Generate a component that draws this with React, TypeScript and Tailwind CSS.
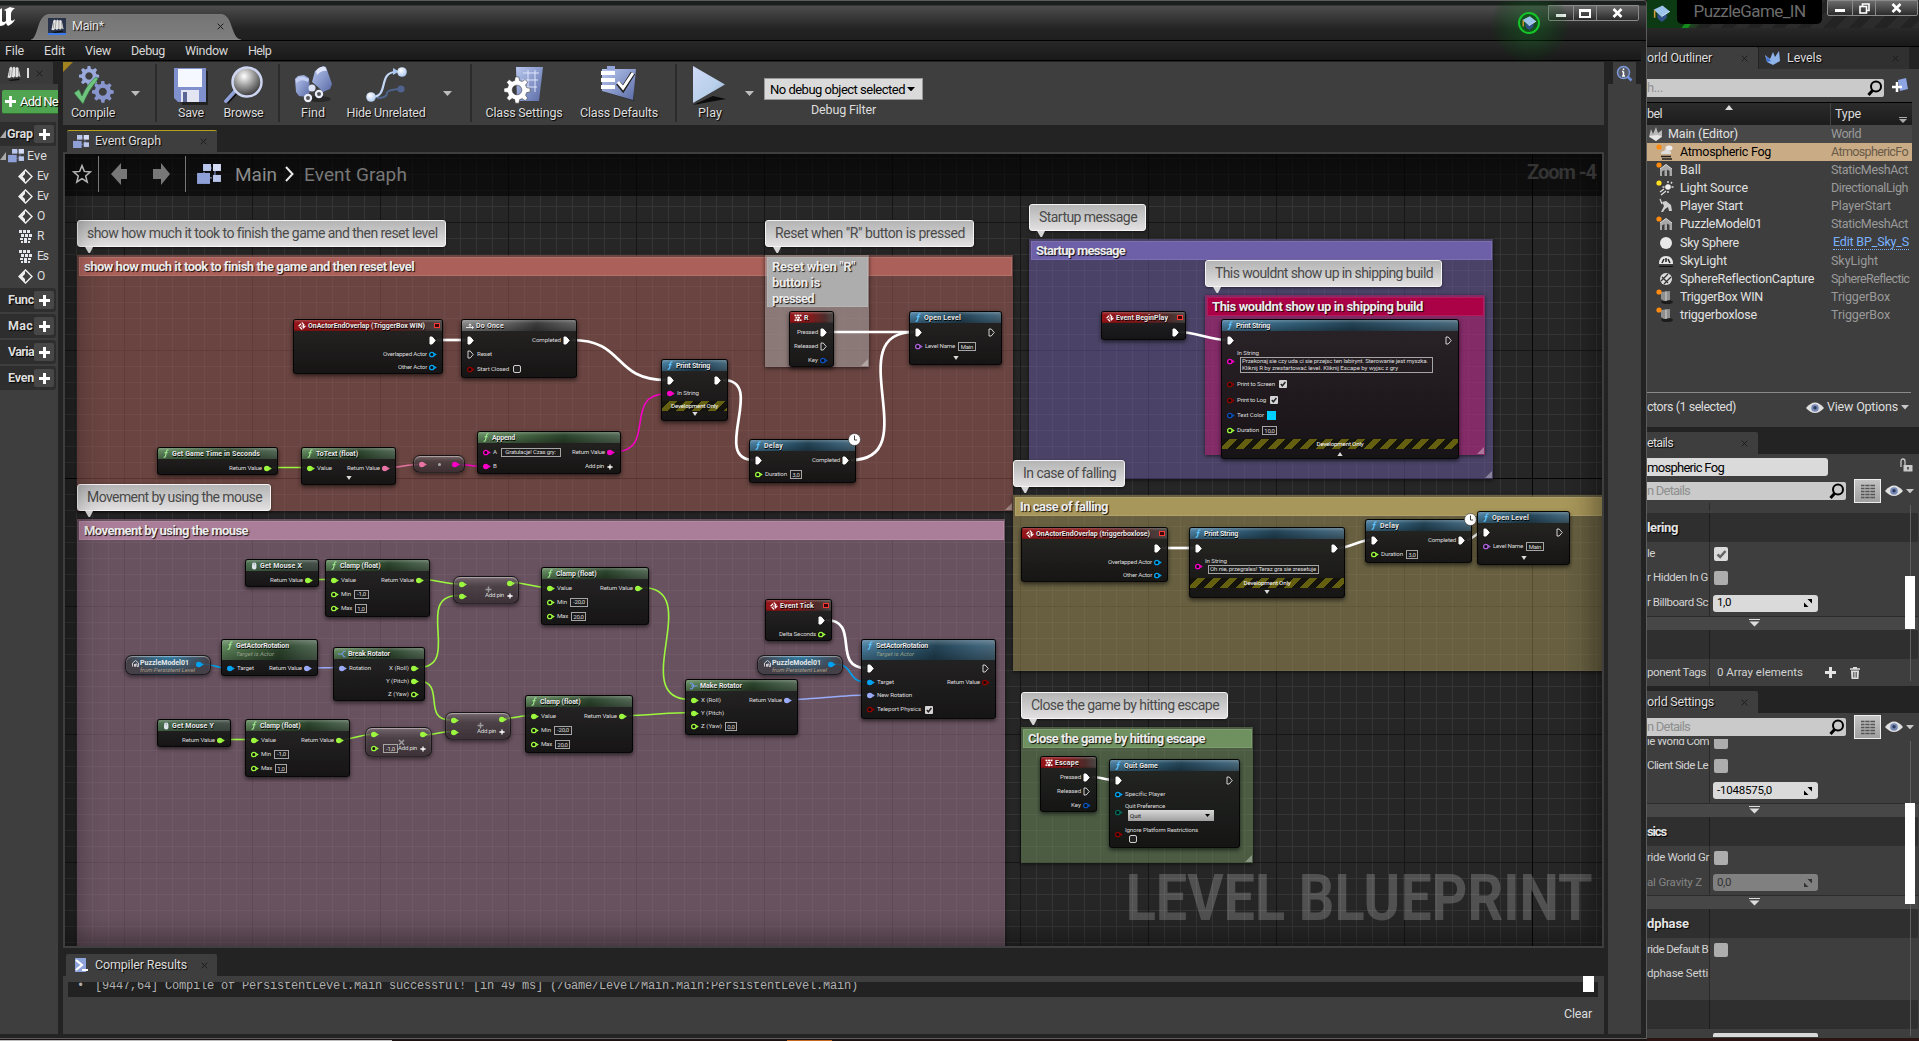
import React, { useLayoutEffect, useRef } from "react";
import type { ReactNode } from "react";

/* Text spread to a given width by letter spacing measured at run time. */
function Fit({ w, className = "", children }: { w: number; className?: string; children: string }) {
  const ref = useRef<HTMLSpanElement>(null);
  useLayoutEffect(() => {
    const el = ref.current;
    if (!el) return;
    el.style.letterSpacing = "0px";
    const natural = el.getBoundingClientRect().width;
    el.style.letterSpacing = `${(w - natural) / children.length}px`;
  }, [w, children]);
  return (
    <span ref={ref} className={`block w-max shrink-0 whitespace-pre ${className}`}>
      {children}
    </span>
  );
}

/* ---------- graph primitives ---------- */

const GREEN = "#9cf83e";
const WHITE = "#ffffff";
const BLUE = "#00a2f2";
const MAG = "#f800c8";
const LAV = "#9aabfa";
const RED = "#8c0000";
const ROSE = "#e874a4";
const NAVY = "#0a50b8";
const TEAL = "#04685a";
const PURPLE = "#a860d8";
const EXEC = "exec";

function Pin({ c, o }: { c: string; o?: boolean }) {
  if (c === EXEC)
    return (
      <svg className="shrink-0" width="9" height="9" viewBox="-0.5 0 9 9">
        <path d="M1.5 1 H3.7 L6.7 4.5 L3.7 8 H1.5Z" fill={o ? "none" : "#fff"} stroke="#fff" strokeWidth={o ? 0.8 : 1} strokeLinejoin="round" />
      </svg>
    );
  return (
    <svg className="shrink-0" width="9" height="7" viewBox="0 0 9 7">
      <circle cx="3.8" cy="3.5" r={o ? 2.2 : 2.8} fill={o ? "#0b0b0b" : c} stroke={c} strokeWidth={o ? 1.3 : 0} />
      <path d="M6.2 1.8 L8.8 3.5 L6.2 5.2Z" fill={c} />
    </svg>
  );
}

function Label({ w, children, className = "text-[#dcdcdc]" }: { w: number; children: string; className?: string }) {
  return <Fit w={w} className={`text-[6.2px] leading-[7px] ${className}`}>{children}</Fit>;
}

/* A line of pins: inputs on the left, outputs on the right. */
function Row({ h = 14, left, right }: { h?: number; left?: ReactNode; right?: ReactNode }) {
  return (
    <div className="flex shrink-0 items-center justify-between pl-[4px] pr-[5px]" style={{ height: h }}>
      <div className="flex items-center">{left}</div>
      <div className="flex items-center">{right}</div>
    </div>
  );
}

function In({ c, o, t, w = 0, children }: { c: string; o?: boolean; t?: string; w?: number; children?: ReactNode }) {
  return (
    <div className="flex items-center gap-[2px]">
      <Pin c={c} o={o} />
      {t && <Label w={w}>{t}</Label>}
      {children}
    </div>
  );
}

function Out({ c, o, t, w = 0 }: { c: string; o?: boolean; t?: string; w?: number }) {
  return (
    <div className="flex items-center gap-[1px]">
      {t && <Label w={w}>{t}</Label>}
      <Pin c={c} o={o} />
    </div>
  );
}

function Box({ w, children }: { w: number; children: ReactNode }) {
  return (
    <div className="ml-[1px] flex h-[9px] shrink-0 items-center justify-center whitespace-nowrap border border-[#a5a5a5] text-[6px] leading-none tracking-[-0.2px] text-[#ddd]" style={{ width: w }}>
      {children}
    </div>
  );
}

function Check({ on }: { on?: boolean }) {
  return on ? (
    <svg className="ml-[2px] shrink-0" width="8" height="8" viewBox="0 0 8 8">
      <rect width="8" height="8" rx="1" fill="#d4d4d4" />
      <path d="M1.8 4 L3.4 5.8 L6.4 2" stroke="#222" strokeWidth="1.4" fill="none" />
    </svg>
  ) : (
    <div className="ml-[2px] h-2 w-2 shrink-0 rounded-[2px] border-[1.5px] border-[#d0d0d0] bg-[#222]" />
  );
}

function Tri({ h, up }: { h: number; up?: boolean }) {
  return (
    <div className="flex shrink-0 items-center justify-center" style={{ height: h }}>
      <svg width="6" height="4" viewBox="0 0 6 4">
        <path d={up ? "M0.4 4 L3 0 L5.6 4Z" : "M0.4 0 L3 4 L5.6 0Z"} fill="#ddd" />
      </svg>
    </div>
  );
}

function DevOnly() {
  return (
    <div className="mt-px flex h-[10px] shrink-0 items-center justify-center bg-[repeating-linear-gradient(135deg,#15140c_0px,#15140c_5.6px,#655f10_5.6px,#655f10_11.3px)]">
      <Label w={47} className="text-white">Development Only</Label>
    </div>
  );
}

const HEADS: Record<string, string> = {
  red: "bg-[linear-gradient(180deg,rgba(255,255,255,.22),transparent_25%,transparent_80%,rgba(0,0,0,.25)),linear-gradient(90deg,#941418,#861a1c_45%,#4d2b2a_80%,#4a4644)]",
  blue: "bg-[linear-gradient(180deg,rgba(255,255,255,.22),transparent_30%,rgba(0,0,0,.3)),linear-gradient(100deg,#4b7f9f,#366580_25%,#234355_55%,#3d6279_85%,#4c6b7c)]",
  green: "bg-[linear-gradient(180deg,rgba(255,255,255,.22),transparent_30%,rgba(0,0,0,.3)),linear-gradient(100deg,#62895f,#4d704a_25%,#2c442b_60%,#47604a_85%,#566a57)]",
  mouse: "bg-[linear-gradient(180deg,rgba(255,255,255,.25),transparent_30%,rgba(0,0,0,.2)),linear-gradient(90deg,#4d7050,#3c5540_50%,#46504a)]",
  gray: "bg-[linear-gradient(180deg,rgba(255,255,255,.22),transparent_30%,rgba(0,0,0,.3)),linear-gradient(100deg,#8a8a8a,#6f6f6f_30%,#3c3c3c_65%,#666)]",
};

function HeadIcon({ kind }: { kind: string }) {
  if (kind === "event")
    return (
      <svg className="shrink-0" width="8" height="8" viewBox="0 0 8 8"><path d="M4 .8 L7.2 4 L4 7.2 L.8 4Z" fill="none" stroke="#fff" strokeWidth="1.2" strokeDasharray="3.2 1.3" /><path d="M3 4h3M4.8 2.8 6 4 4.8 5.2" stroke="#fff" strokeWidth=".9" fill="none" /></svg>
    );
  if (kind === "key")
    return (
      <svg className="shrink-0" width="8" height="8" viewBox="0 0 8 8" fill="#fff"><rect x=".5" y=".6" width="2" height="1.7" /><rect x="3" y=".6" width="2" height="1.7" /><rect x="5.5" y=".6" width="2" height="1.7" /><rect x="1.5" y="2.9" width="2" height="1.7" /><rect x="4" y="2.9" width="2" height="1.7" /><rect x="3" y="5" width="2" height="2.2" /><rect x=".5" y="5.4" width="2" height="1.5" /><rect x="5.5" y="5.4" width="2" height="1.5" /></svg>
    );
  if (kind === "mouse")
    return (
      <svg className="shrink-0" width="8" height="8" viewBox="0 0 8 8"><rect x="2" y=".6" width="4.4" height="7" rx="2.1" fill="#dfe3ea" /><path d="M4.2 1v2.6" stroke="#8790a0" strokeWidth=".6" /></svg>
    );
  if (kind === "break" || kind === "make")
    return (
      <svg className="shrink-0" width="8" height="8" viewBox="0 0 8 8" fill="none" stroke="#6f9cf0" strokeWidth="1.1">{kind === "break" ? <path d="M0 4h4M7.5 1.2H6L4 4l2 2.8h1.5" /> : <path d="M0 1.2h2L4 4 2 6.8H0M1 4h6.5" />}</svg>
    );
  if (kind === "once")
    return (
      <svg className="shrink-0" width="8" height="8" viewBox="0 0 8 8" fill="none" stroke="#e4e4e4" strokeWidth="1"><path d="M0 5.5h7.5M4 5.5V2.2M2.8 3.4 4 1.8l1.2 1.6M6 4.2 7.5 5.5 6 6.8" /></svg>
    );
  return (
    <svg className="shrink-0" width="8" height="9" viewBox="0 0 8 9" fill="none" stroke={kind === "fg" ? "#9be08e" : "#5fc4ff"} strokeWidth="1.2"><path d="M6.4 1.1C5.2.5 4.7 1.2 4.4 2.6L3.6 6.6C3.3 8 2.7 8.5 1.6 8M2.6 3.6h3" /></svg>
  );
}

type NodeProps = { x: number; y: number; w: number; h: number; head: string; icon: string; title: string; tw: number; sub?: boolean; stop?: boolean; badge?: ReactNode; children?: ReactNode };

function Node({ x, y, w, h, head, icon, title, tw, sub, stop, badge, children }: NodeProps) {
  return (
    <div className="absolute rounded-[3px] shadow-[0_2px_4px_rgba(0,0,0,.6)]" style={{ left: x, top: y, width: w, height: h }}>
      <div className="flex h-full flex-col overflow-hidden rounded-[3px] border border-black/80 bg-[linear-gradient(180deg,rgba(34,34,34,.92),rgba(18,18,18,.95))]">
        <div className={`shrink-0 pl-[4px] ${sub ? "mb-px h-[20px]" : "mb-[2px] h-[11px]"} ${HEADS[head]}`}>
          <div className="flex h-[11px] items-center gap-[2px]">
            <HeadIcon kind={icon} />
            <Fit w={tw} className="text-[7px] font-bold leading-[8px] text-[#e8e8e8] [text-shadow:0.5px_0.5px_0.5px_#000]">{title}</Fit>
            {stop && <div className="ml-auto mr-[2px] h-[5px] w-[6px] border border-[#ff3a36] bg-[#3c0505]" />}
          </div>
          {sub && <Label w={38} className="ml-[10px] italic text-[#93a088]">Target is Actor</Label>}
        </div>
        {children}
      </div>
      {badge}
    </div>
  );
}

function Pill({ x, y, w, h, blue, children }: { x: number; y: number; w: number; h: number; blue?: boolean; children?: ReactNode }) {
  return (
    <div
      className={`absolute flex rounded-[7px] border border-black/60 shadow-[0_2px_4px_rgba(0,0,0,.5),inset_0_1px_1px_rgba(255,255,255,.45)] ${blue ? "bg-[radial-gradient(ellipse_at_50%_0%,rgba(40,130,175,.9),rgba(60,60,66,.8)_70%)]" : "bg-[linear-gradient(180deg,rgba(120,110,115,.7),rgba(68,60,64,.75)_35%,rgba(50,42,46,.8))]"}`}
      style={{ left: x, top: y, width: w, height: h }}
    >
      {children}
    </div>
  );
}

function Plus({ c = "#fff", s = 7 }: { c?: string; s?: number }) {
  return <svg className="shrink-0" width={s} height={s} viewBox="0 0 7 7"><path d="M3.5 .5v6M.5 3.5h6" stroke={c} strokeWidth="1.5" /></svg>;
}

function AddPin() {
  return <div className="flex items-center gap-[3px] pr-[2px]"><Label w={19}>Add pin</Label><Plus s={6} /></div>;
}

function Clamp({ x, y, wide }: { x: number; y: number; wide?: boolean }) {
  return (
    <Node x={x} y={y} w={wide ? 108 : 105} h={58} head="green" icon="fg" title="Clamp (float)" tw={40.5}>
      <Row left={<In c={GREEN} t="Value" w={15} />} right={<Out c={GREEN} t="Return Value" w={33} />} />
      <Row left={<In c={GREEN} o t="Min" w={10}><Box w={wide ? 18 : 15}>{wide ? "-20,0" : "-1,0"}</Box></In>} />
      <Row h={15} left={<In c={GREEN} o t="Max" w={11}><Box w={wide ? 15 : 12}>{wide ? "20,0" : "1,0"}</Box></In>} />
    </Node>
  );
}

function Mouse({ x, y, axis }: { x: number; y: number; axis: string }) {
  return (
    <Node x={x} y={y} w={74} h={28} head="mouse" icon="mouse" title={"Get Mouse " + axis} tw={42}>
      <Row right={<Out c={GREEN} t="Return Value" w={33} />} />
    </Node>
  );
}

function Add({ x, y }: { x: number; y: number }) {
  return (
    <Pill x={x} y={y} w={66} h={28}>
      <div className="flex flex-col gap-[5px] pl-[4px] pt-[4px]"><Pin c={GREEN} /><Pin c={GREEN} /></div>
      <div className="ml-auto flex w-[33px] flex-col pr-[3px] pt-[3px]">
        <div className="flex justify-between"><span className="pt-[6px]"><Plus c="#9a9a9a" /></span><Pin c={GREEN} /></div>
        <div className="-mt-[1px] flex justify-end"><AddPin /></div>
      </div>
    </Pill>
  );
}

function Puzzle({ x, y }: { x: number; y: number }) {
  return (
    <Pill x={x} y={y} w={86} h={20} blue>
      <svg className="ml-[6px] mt-[4px] shrink-0" width="7" height="7" viewBox="0 0 7 7"><path d="M.5 6.5V3L3.5.5 6.5 3V6.5H5V4H3.5V6.5H2.5V4" fill="none" stroke="#ccc" strokeWidth="1" /></svg>
      <div className="ml-[1px] flex w-[55px] flex-col pt-[3px]">
        <Fit w={49} className="text-[7px] font-bold leading-[8px] text-[#e8e8e8]">PuzzleModel01</Fit>
        <Label w={55} className="italic text-[#a79c86]">from Persistent Level</Label>
      </div>
      <span className="pt-[5px]"><Pin c={BLUE} /></span>
    </Pill>
  );
}

function Delay({ x, y }: { x: number; y: number }) {
  const clock = <svg className="absolute -right-[5px] -top-[6px]" width="13" height="13" viewBox="0 0 13 13"><circle cx="6.5" cy="6.5" r="6" fill="#fff" stroke="#222" strokeWidth=".5" /><path d="M6.5 2.5V7H9" stroke="#444" fill="none" strokeWidth="1" /></svg>;
  return (
    <Node x={x} y={y} w={107} h={44} head="blue" icon="f" title="Delay" tw={19} badge={clock}>
      <Row left={<In c={EXEC} />} right={<Out c={EXEC} t="Completed" w={28} />} />
      <Row h={15} left={<In c={GREEN} o t="Duration" w={22}><Box w={12}>3,0</Box></In>} />
    </Node>
  );
}

function OpenLevel({ x, y }: { x: number; y: number }) {
  return (
    <Node x={x} y={y} w={93} h={54} head="blue" icon="f" title="Open Level" tw={37}>
      <Row left={<In c={EXEC} />} right={<Out c={EXEC} o />} />
      <Row h={15} left={<In c={PURPLE} o t="Level Name" w={30}><Box w={18}>Main</Box></In>} />
      <Tri h={8} />
    </Node>
  );
}

function Overlap({ x, y, w, title, tw }: { x: number; y: number; w: number; title: string; tw: number }) {
  return (
    <Node x={x} y={y} w={w} h={55} head="red" icon="event" title={title} tw={tw} stop>
      <Row right={<Out c={EXEC} />} />
      <Row right={<Out c={BLUE} o t="Overlapped Actor" w={44} />} />
      <Row h={12} right={<Out c={BLUE} o t="Other Actor" w={29} />} />
    </Node>
  );
}

function KeyNode({ x, y, w, title, tw }: { x: number; y: number; w: number; title: string; tw: number }) {
  return (
    <Node x={x} y={y} w={w} h={56} head="red" icon="key" title={title} tw={tw}>
      <Row right={<Out c={EXEC} t="Pressed" w={21} />} />
      <Row right={<Out c={EXEC} o t="Released" w={24} />} />
      <Row right={<Out c={NAVY} o t="Key" w={10} />} />
    </Node>
  );
}

function Comment({ x, y, w, h, c, hh = 19, grip = true, tint, lines }: { x: number; y: number; w: number; h: number; c: string; hh?: number; grip?: boolean; tint?: string; lines: [string, number][] }) {
  return (
    <div className="absolute shadow-[0_1px_4px_rgba(0,0,0,.6)]" style={{ left: x, top: y, width: w, height: h }}>
      <div className="absolute inset-0 opacity-50" style={{ backgroundColor: tint ?? c }} />
      <div className="relative ml-[2px] mr-px flex flex-col border border-white/10 pl-[4px] text-[13px] font-bold leading-[15px] text-[#ececec] [text-shadow:1px_1px_1px_rgba(0,0,0,.9)]" style={{ height: hh, top: 2, backgroundColor: c }}>
        {lines.map(([t, w]) => <Fit key={t} w={w} className="pt-px last:pb-0">{t}</Fit>)}
      </div>
      {grip && <svg className="absolute bottom-[1px] right-[1px]" width="7" height="7" viewBox="0 0 7 7"><path d="M0 7L7 0V7Z" fill="#fff" opacity=".35" /></svg>}
    </div>
  );
}

function Bubble({ x, y, w, tw, children }: { x: number; y: number; w: number; tw: number; children: string }) {
  return (
    <div className="absolute flex h-[27px] items-center rounded-[3px] border border-[#f4f4f4] bg-[linear-gradient(180deg,#b4b4b4,#e2e0e0)] pb-px pl-[9px] text-[14px] leading-none text-[#4a4a4a] shadow-[0_1px_3px_rgba(0,0,0,.5)]" style={{ left: x, top: y, width: w }}>
      <Fit w={tw}>{children}</Fit>
      <svg className="absolute left-[7px] top-[26px]" width="8" height="6" viewBox="0 0 8 6"><path d="M0 0H8L5 6H3.6Z" fill="#d6d6d6" /></svg>
    </div>
  );
}

type Wire = [number, number, number, number, string];
const WIRES: Wire[] = [
  [437, 340, 466, 340, WHITE],
  [572, 340, 666, 380, WHITE],
  [723, 380, 754, 460, WHITE],
  [851, 460, 914, 332, WHITE],
  [829, 332, 914, 332, WHITE],
  [614, 452, 666, 394, MAG],
  [272, 467.5, 306, 467.5, GREEN],
  [389, 467.5, 418, 464.5, ROSE],
  [458, 464.5, 483, 466.5, MAG],
  [1180, 332, 1226, 340, WHITE],
  [1162, 548, 1194, 548, WHITE],
  [1339, 548, 1370, 540, WHITE],
  [1467, 540, 1482, 532, WHITE],
  [1092, 777, 1114, 780, WHITE],
  [312, 579.5, 330, 579.5, GREEN],
  [423, 579.5, 458, 584, GREEN],
  [513, 582.5, 546, 587.5, GREEN],
  [642, 587.5, 690, 699.5, GREEN],
  [203, 664, 226, 668, BLUE],
  [311, 668, 338, 667.5, LAV],
  [418, 667.5, 458, 595.5, GREEN],
  [418, 681, 450, 720, GREEN],
  [224, 739.5, 250, 739.5, GREEN],
  [343, 739.5, 370, 734.5, GREEN],
  [425, 735, 450, 731.5, GREEN],
  [505, 718.5, 530, 715.5, GREEN],
  [626, 715.5, 690, 712.5, GREEN],
  [791, 699.5, 866, 695, LAV],
  [826, 620, 866, 668, WHITE],
  [835, 664, 866, 682, BLUE],
];

function Wires() {
  return (
    <svg className="absolute left-0 top-0" width="1602" height="946" fill="none">
      {WIRES.map(([x1, y1, x2, y2, c], i) => {
        const dx = x2 - x1, dy = Math.abs(y2 - y1);
        const t = dy < 12 ? dx * 0.3 : dx * 0.4 + dy * 0.4;
        return <path key={i} d={`M${x1} ${y1}C${x1 + t} ${y1} ${x2 - t} ${y2} ${x2} ${y2}`} stroke={c} strokeWidth={c === WHITE ? 2.7 : 1.6} />;
      })}
    </svg>
  );
}

function Canvas() {
  return (
    <div className="relative h-[792px] w-[1537px] overflow-hidden bg-[#262626]">
      <div className="absolute -left-[65px] -top-[154px] h-[946px] w-[1602px]">
        <svg className="absolute left-0 top-0" width="1602" height="946">
          <defs>
            <pattern id="minor" x="12" y="14" width="16" height="16" patternUnits="userSpaceOnUse"><path d="M0 .5H16M.5 0V16" stroke="#353535" /></pattern>
            <pattern id="major" x="124" y="94" width="128" height="128" patternUnits="userSpaceOnUse"><path d="M0 .5H128M.5 0V128" stroke="#161616" /></pattern>
          </defs>
          <rect width="1602" height="946" fill="url(#minor)" />
          <rect width="1602" height="946" fill="url(#major)" />
          <path d="M0 478.5H1602M1532.5 0V946" stroke="#050505" />
        </svg>

        <Comment x={77} y={255} w={936} h={256} c="#ab615a" lines={[["show how much it took to finish the game and then reset level", 330]]} />
        <Comment x={77} y={519} w={928} h={440} c="#aa7d98" lines={[["Movement by using the mouse", 164]]} />
        <Comment x={1029} y={239} w={464} h={240} c="#6d5fa8" lines={[["Startup message", 89]]} />
        <Comment x={1013} y={495} w={640} h={176} c="#a8975a" grip={false} lines={[["In case of falling", 88]]} />
        <Comment x={1021} y={727} w={232} h={136} c="#6f9160" lines={[["Close the game by hitting escape", 177]]} />
        <Comment x={1205} y={295} w={280} h={160} c="#ab0146" tint="#b91468" lines={[["This wouldnt show up in shipping build", 211]]} />
        <Comment x={765} y={255} w={104} h={112} hh={50} c="#adadad" lines={[['Reset when "R"', 83], ["button is", 48], ["pressed", 42]]} />

        <Wires />

        <Overlap x={293} y={319} w={150} title="OnActorEndOverlap (TriggerBox WIN)" tw={117} />
        <Node x={461} y={319} w={116} h={59} head="gray" icon="once" title="Do Once" tw={28}>
          <Row left={<In c={EXEC} />} right={<Out c={EXEC} t="Completed" w={29} />} />
          <Row left={<In c={EXEC} o t="Reset" w={15} />} />
          <Row h={16} left={<In c={RED} o t="Start Closed" w={32}><Check /></In>} />
        </Node>
        <Node x={661} y={359} w={67} h={62} head="blue" icon="f" title="Print String" tw={34}>
          <Row left={<In c={EXEC} />} right={<Out c={EXEC} />} />
          <Row h={13} left={<In c={MAG} t="In String" w={22} />} />
          <DevOnly /><Tri h={6} />
        </Node>
        <Node x={477} y={431} w={144} h={43} head="green" icon="fg" title="Append" tw={23}>
          <Row left={<In c={MAG} o t="A" w={4.5}><Box w={60}>Gratulacje! Czas gry:</Box></In>} right={<Out c={MAG} t="Return Value" w={33} />} />
          <Row h={15} left={<In c={MAG} t="B" w={4.5} />} right={<AddPin />} />
        </Node>
        <Node x={157} y={447} w={121} h={28} head="green" icon="fg" title="Get Game Time in Seconds" tw={88}>
          <Row right={<Out c={GREEN} t="Return Value" w={33} />} />
        </Node>
        <Node x={301} y={447} w={95} h={38} head="green" icon="fg" title="ToText (float)" tw={42}>
          <Row left={<In c={GREEN} t="Value" w={15} />} right={<Out c={ROSE} t="Return Value" w={33} />} />
          <Tri h={6} />
        </Node>
        <Pill x={413} y={455} w={52} h={18}>
          <div className="flex grow items-center justify-between px-[4px]"><Pin c={ROSE} /><div className="h-[3px] w-[3px] rounded-full bg-[#aaa]" /><Pin c={MAG} /></div>
        </Pill>
        <KeyNode x={789} y={311} w={45} title="R" tw={5} />
        <OpenLevel x={909} y={311} />
        <Delay x={749} y={439} />

        <Node x={1101} y={311} w={85} h={29} head="red" icon="event" title="Event BeginPlay" tw={52} stop><Row right={<Out c={EXEC} />} /></Node>
        <Node x={1221} y={319} w={238} h={140} head="blue" icon="f" title="Print String" tw={34}>
          <Row left={<In c={EXEC} />} right={<Out c={EXEC} o />} />
          <Row h={29} left={
            <In c={MAG} o>
              <div className="flex flex-col">
                <Label w={22}>In String</Label>
                <div className="ml-[3px] flex h-[16px] w-[193px] flex-col border border-[#a5a5a5] pl-[1px]">
                  <Label w={186}>Przekonaj sie czy uda ci sie przejsc ten labirynt. Sterowanie jest myszka.</Label>
                  <Label w={156}>Kliknij R by zrestartować level. Kliknij Escape by wyjsc z gry</Label>
                </div>
              </div>
            </In>
          } />
          <Row h={16} left={<In c={RED} o t="Print to Screen" w={38}><Check on /></In>} />
          <Row h={16} left={<In c={RED} o t="Print to Log" w={29}><Check on /></In>} />
          <Row h={15} left={<In c={NAVY} o t="Text Color" w={27}><div className="ml-[1px] h-[9px] w-[9px] bg-[#00d0ff]" /></In>} />
          <Row h={15} left={<In c={GREEN} o t="Duration" w={22}><Box w={15}>10,0</Box></In>} />
          <DevOnly /><Tri h={9} up />
        </Node>

        <Overlap x={1021} y={527} w={147} title="OnActorEndOverlap (triggerboxlose)" tw={114} />
        <Node x={1189} y={527} w={156} h={71} head="blue" icon="f" title="Print String" tw={34}>
          <Row left={<In c={EXEC} />} right={<Out c={EXEC} />} />
          <Row h={22} left={
            <In c={MAG} o>
              <div className="flex flex-col">
                <Label w={22}>In String</Label>
                <div className="ml-[3px] flex h-[9px] w-[111px] border border-[#a5a5a5] pl-[1px]"><Label w={106}>Oh nie, przegrales! Teraz gra sie zresetuje</Label></div>
              </div>
            </In>
          } />
          <DevOnly /><Tri h={7} />
        </Node>
        <Delay x={1365} y={519} />
        <OpenLevel x={1477} y={511} />

        <Mouse x={245} y={559} axis="X" />
        <Clamp x={325} y={559} />
        <Add x={453} y={576} />
        <Clamp x={541} y={567} wide />
        <Puzzle x={125} y={655} />
        <Node x={221} y={639} w={97} h={37} head="green" icon="fg" title="GetActorRotation" tw={53} sub>
          <Row left={<In c={BLUE} t="Target" w={17} />} right={<Out c={LAV} t="Return Value" w={33} />} />
        </Node>
        <Node x={333} y={647} w={92} h={54} head="green" icon="break" title="Break Rotator" tw={42}>
          <Row left={<In c={LAV} t="Rotation" w={22} />} right={<Out c={GREEN} t="X (Roll)" w={20} />} />
          <Row h={12} right={<Out c={GREEN} t="Y (Pitch)" w={23} />} />
          <Row right={<Out c={GREEN} o t="Z (Yaw)" w={21} />} />
        </Node>
        <Mouse x={157} y={719} axis="Y" />
        <Clamp x={245} y={719} />
        <Pill x={365} y={727} w={67} h={30}>
          <div className="flex flex-col gap-[6px] pl-[4px] pt-[3px]">
            <Pin c={GREEN} />
            <div className="flex items-center gap-[3px]"><Pin c={GREEN} o /><Box w={15}>-1,0</Box></div>
          </div>
          <div className="ml-auto flex w-[35px] flex-col pr-[3px] pt-[3px]">
            <div className="flex justify-between">
              <svg className="mt-[8px]" width="7" height="7" viewBox="0 0 7 7"><path d="M1 1 6 6M6 1 1 6" stroke="#a0a0a0" strokeWidth="1.3" /></svg>
              <Pin c={GREEN} />
            </div>
            <div className="-mt-px flex justify-end"><AddPin /></div>
          </div>
        </Pill>
        <Add x={445} y={712} />
        <Clamp x={525} y={695} wide />
        <Node x={765} y={599} w={67} h={42} head="red" icon="event" title="Event Tick" tw={34} stop>
          <Row right={<Out c={EXEC} />} /><Row right={<Out c={GREEN} o t="Delta Seconds" w={37} />} />
        </Node>
        <Puzzle x={757} y={655} />
        <Node x={685} y={679} w={113} h={56} head="green" icon="make" title="Make Rotator" tw={42}>
          <Row left={<In c={GREEN} t="X (Roll)" w={20} />} right={<Out c={LAV} t="Return Value" w={33} />} />
          <Row h={12} left={<In c={GREEN} t="Y (Pitch)" w={23} />} />
          <Row h={15} left={<In c={GREEN} o t="Z (Yaw)" w={21}><Box w={12}>0,0</Box></In>} />
        </Node>
        <Node x={861} y={639} w={135} h={80} head="blue" icon="f" title="SetActorRotation" tw={52} sub>
          <Row left={<In c={EXEC} />} right={<Out c={EXEC} o />} />
          <Row left={<In c={BLUE} t="Target" w={17} />} right={<Out c={RED} o t="Return Value" w={33} />} />
          <Row h={12} left={<In c={LAV} t="New Rotation" w={35} />} />
          <Row h={17} left={<In c={RED} o t="Teleport Physics" w={44}><Check on /></In>} />
        </Node>

        <KeyNode x={1040} y={756} w={57} title="Escape" tw={24} />
        <Node x={1109} y={759} w={131} h={89} head="blue" icon="f" title="Quit Game" tw={34}>
          <Row left={<In c={EXEC} />} right={<Out c={EXEC} o />} />
          <Row left={<In c={BLUE} o t="Specific Player" w={40} />} />
          <Row h={22} left={
            <In c={TEAL} o>
              <div className="flex flex-col">
                <Label w={40}>Quit Preference</Label>
                <div className="ml-[3px] flex h-[11px] w-[86px] items-center justify-between bg-[linear-gradient(180deg,#d8d8d8,#a0a0a0)] px-[2px] text-[6px] leading-none text-[#111]">
                  <span>Quit</span>
                  <svg className="mr-[2px]" width="5" height="3" viewBox="0 0 5 3"><path d="M0 0H5L2.5 3Z" fill="#000" /></svg>
                </div>
              </div>
            </In>
          } />
          <Row h={23} left={<In c={RED} o><div className="flex flex-col gap-px"><Label w={73}>Ignore Platform Restrictions</Label><span className="ml-[2px]"><Check /></span></div></In>} />
        </Node>

        <Bubble x={77} y={220} w={369} tw={350}>show how much it took to finish the game and then reset level</Bubble>
        <Bubble x={765} y={220} w={209} tw={190}>{'Reset when "R" button is pressed'}</Bubble>
        <Bubble x={1029} y={204} w={117} tw={98}>Startup message</Bubble>
        <Bubble x={1205} y={260} w={237} tw={218}>This wouldnt show up in shipping build</Bubble>
        <Bubble x={1013} y={460} w={112} tw={93}>In case of falling</Bubble>
        <Bubble x={77} y={484} w={194} tw={175}>Movement by using the mouse</Bubble>
        <Bubble x={1021} y={692} w={207} tw={188}>Close the game by hitting escape</Bubble>
      </div>

      <div className="absolute bottom-[15px] right-[10px] origin-right scale-x-[0.87] whitespace-nowrap text-[64px] font-bold leading-none text-white/20">LEVEL BLUEPRINT</div>
      <div className="pointer-events-none absolute inset-0 shadow-[inset_0_0_30px_6px_rgba(0,0,0,.45)]" />

      <div className="absolute inset-x-0 top-0 flex h-[42px] items-center bg-black/60 pb-[2px]">
        <svg className="ml-[7px]" width="20" height="20" viewBox="0 0 20 20"><path d="M10 1.6 12.3 7.4 18.4 7.9 13.7 11.9 15.2 18 10 14.7 4.8 18 6.3 11.9 1.6 7.9 7.7 7.4Z" fill="none" stroke="#b5b5b5" strokeWidth="1.5" /></svg>
        <div className="ml-[6px] h-9 w-px bg-[#777]" />
        <svg className="ml-[12px]" width="17" height="22" viewBox="0 0 17 22"><path d="M0 11 10 0V6H16V16H10V22Z" fill="#777" /></svg>
        <svg className="ml-[25px]" width="17" height="22" viewBox="0 0 17 22"><path d="M17 11 8 0V6H0V16H8V22Z" fill="#777" /></svg>
        <div className="ml-[15px] h-9 w-px bg-[#777]" />
        <div className="ml-[11px]"><GraphIcon s={24} /></div>
        <Fit w={42} className="ml-[14px] text-[19px] leading-none text-[#8b8b8b]">Main</Fit>
        <svg className="ml-[8px]" width="9" height="16" viewBox="0 0 9 16"><path d="M1 1 7.5 8 1 15" fill="none" stroke="#e8e8e8" strokeWidth="2" /></svg>
        <Fit w={103} className="ml-[10px] text-[19px] leading-none text-[#777]">Event Graph</Fit>
        <Fit w={69} className="-mt-[5px] ml-auto mr-[6px] text-[20px] font-bold leading-none text-[#343434]">Zoom -4</Fit>
      </div>
    </div>
  );
}

/* ---------- chrome ---------- */

function GraphIcon({ s = 16 }: { s?: number }) {
  return (
    <svg width={s} height={s * 0.83} viewBox="0 0 24 20">
      <path d="M9 4h6M18 7v6M9 14h6M7 8v4" stroke="#7d8cc0" strokeWidth="1.2" />
      <rect x="6" y="0" width="8" height="7" fill="#b9c5ea" /><rect x="16" y="0" width="8" height="7" fill="#d5dcf5" />
      <rect x="0" y="9" width="13" height="11" fill="#8fa0d8" /><rect x="16" y="11" width="8" height="7" fill="#b9c5ea" />
    </svg>
  );
}

function X({ className = "" }: { className?: string }) {
  return <svg className={`shrink-0 ${className}`} width="7" height="7" viewBox="0 0 7 7"><path d="M.7.7 6.3 6.3M6.3.7.7 6.3" stroke="#1c1c1c" strokeWidth="1" /></svg>;
}

function Book({ s = 16 }: { s?: number }) {
  return (
    <svg className="shrink-0" width={s} height={s} viewBox="0 0 16 16">
      <path d="M2 15 13 13.500 14 15 5 16Z" fill="#111" />
      <path d="M1.500 12.500 3.500 3 5 1.500 6.500 3 8 1.500 9.500 3 11 2 12.500 3 14.500 12 12.500 11 11 12.500 9 11.300 7.500 12.800 5.500 11.500 4 13Z" fill="#e4e4e4" />
      <path d="M6.500 3 5.500 11.500M9.500 3V11.300M4 5 3.400 11M12.300 4 13 11" stroke="#8d8d8d" strokeWidth=".8" />
    </svg>
  );
}

function Hat({ s = 18 }: { s?: number }) {
  return <svg width={s} height={s} viewBox="0 0 18 18"><path d="M5 9 9 12 14 8.500V13Q12 15 9.500 17 6 15 5 13Z" fill="#2f4f86" /><path d="M1.500 5.500 10 1.500 17 7 9 12Z" fill="#9cc4ea" /><path d="M9 12 17 7" stroke="#d9ecff" strokeWidth=".8" /><path d="M2.500 6v7" stroke="#d19a35" strokeWidth="1.500" /></svg>;
}

function Caret({ c = "#bdbdbd", w = 9 }: { c?: string; w?: number }) {
  return <svg className="block" width={w} height={w * 0.55} viewBox="0 0 10 5.5"><path d="M0 0H10L5 5.500Z" fill={c} /></svg>;
}

function WinButtons({ max = false }: { max?: boolean }) {
  return (
    <div className="flex h-[16px] rounded-b-[2px] border border-[#8b8b8b] bg-[linear-gradient(180deg,#6a6a6a,#2b2b2b)]">
      <div className="flex w-[25px] items-end justify-center border-r border-[#8b8b8b] pb-[3px]"><div className="h-[3px] w-[10px] bg-white" /></div>
      <div className="flex w-[23px] items-center justify-center border-r border-[#8b8b8b]">
        {max ? <svg width="11" height="11" viewBox="0 0 11 11" fill="none" stroke="#fff" strokeWidth="1.600"><path d="M3.500 3V1H10V7.500H8" /><rect x="1" y="3.500" width="6.500" height="6.500" /></svg> : <div className="h-[9px] w-[12px] border-2 border-t-[3px] border-white" />}
      </div>
      <div className="flex w-[41px] items-center justify-center"><svg width="11" height="10" viewBox="0 0 11 10"><path d="M1.500 1 9.500 9M9.500 1 1.500 9" stroke="#fff" strokeWidth="2.600" /></svg></div>
    </div>
  );
}

const gearPath = "M8.600 0h2.800l.5 2.700 2 .8L16.200 2l2 2-1.600 2.200.8 2 2.700.5v2.800l-2.700.5-.8 2 1.600 2.200-2 2-2.200-1.600-2 .8-.5 2.700H8.700l-.5-2.700-2-.8L4 18.200l-2-2 1.600-2.200-.8-2L0 11.500V8.700l2.700-.5.8-2L2 4l2-2 2.200 1.500 2-.8ZM10 6.300a3.700 3.700 0 1 0 .01 0Z";

function ToolIcon({ k }: { k: string }) {
  return (
    <svg width="42" height="42" viewBox="0 0 42 42">
      <defs>
        <linearGradient id="pb" x1="0" y1="0" x2="1" y2="1"><stop offset="0" stopColor="#b9c8f0" /><stop offset="1" stopColor="#5a6ba6" /></linearGradient>
        <radialGradient id="gl" cx=".4" cy=".3" r=".8"><stop offset="0" stopColor="#fff" /><stop offset=".5" stopColor="#8a8a8a" /><stop offset="1" stopColor="#1d1d1d" /></radialGradient>
        <linearGradient id="pl" x1="0" y1="0" x2="1" y2="1"><stop offset="0" stopColor="#cfd9f6" /><stop offset=".6" stopColor="#b8d0ea" /><stop offset="1" stopColor="#90a6cf" /></linearGradient>
        <radialGradient id="ball" cx=".4" cy=".35" r=".7"><stop offset="0" stopColor="#fff" /><stop offset="1" stopColor="#a9c4ee" /></radialGradient>
      </defs>
      {k === "compile" && <><g transform="translate(7 2)"><path d={gearPath} fill="#9aa9dc" fillRule="evenodd" /></g><g transform="translate(20 17) scale(1.080)"><path d={gearPath} fill="#8795cc" fillRule="evenodd" /></g><path d="M2 29 7 25.500 10 32Q15 20 24 13L26 15Q16 27 11 40Z" fill="#6ec47c" stroke="#2f6d3b" strokeWidth=".6" /></>}
      {k === "save" && <><path d="M7 7H38V41H12Z" fill="#111" opacity=".6" /><path d="M4 4H36V38H8L4 34Z" fill="#7f90cc" /><rect x="8" y="5" width="24" height="18" fill="#f6f8ff" /><rect x="11" y="26" width="18" height="12" fill="#e3e6f2" /><rect x="13" y="28" width="4" height="10" fill="#5b6694" /></>}
      {k === "browse" && <><path d="M13 27 3 38" stroke="#111" strokeWidth="6" /><path d="M13 26 3 37" stroke="#8fa0d6" strokeWidth="4" strokeLinecap="round" /><circle cx="24" cy="18" r="14.500" fill="url(#gl)" stroke="#cdd5f0" strokeWidth="2.500" /></>}
      {k === "find" && <><ellipse cx="27" cy="35" rx="12" ry="3" fill="#111" opacity=".5" /><path d="M3 15 6 12 12 11 17 14 18 28 14 33 7 32 4 28Z" fill="url(#pb)" /><path d="M4 15Q9 10 17 15L16 18Q9 14 4 19Z" fill="#c3cff2" /><path d="M23 7 31 2 34 3 40 20 38 25 31 28 26 23 20 18Z" fill="url(#pb)" /><path d="M24 7Q27 2 33 3L35 7Q30 6 25 11Z" fill="#dfe6fb" /><circle cx="20" cy="24" r="3.500" fill="#dce3f8" /><circle cx="16" cy="34" r="4.200" fill="#e8ecf9" /><circle cx="16" cy="34" r="2" fill="#555" /><circle cx="27" cy="30" r="4.200" fill="#e8ecf9" /><circle cx="27" cy="30" r="2" fill="#555" /></>}
      {k === "hide" && <><path d="M12 34Q22 34 22 29 22 26 34 25" stroke="#4e658e" strokeWidth="2" fill="none" /><circle cx="36" cy="25" r="3.600" fill="#50638f" /><path d="M8 33C24 32 13 9 30 8" stroke="#c3d6f5" strokeWidth="2.200" fill="none" /><path d="M28 4 34 7.500 28 11Z" fill="#a9c6ef" /><circle cx="37" cy="8" r="4.800" fill="url(#ball)" /><circle cx="6" cy="33" r="4.800" fill="url(#ball)" /></>}
      {k === "settings" && <><path d="M13 3H40L36 37H14Z" fill="url(#pb)" /><path d="M20 9H36M19 16H35M19 23H34M25 6V28M32 6V28" stroke="#dfe6fb" strokeWidth="1" /><g transform="translate(1 13) scale(1.300)"><path d={gearPath} fill="#fff" fillRule="evenodd" stroke="#333" strokeWidth=".4" /></g></>}
      {k === "defaults" && <><path d="M6 6 36 7V37L6 28Z" fill="#111" opacity=".4" /><path d="M4 5H38L35 36 4 27Z" fill="url(#pb)" /><path d="M9 2h8v4H9Z" fill="#93a4da" /><rect x="3" y="7" width="14" height="4" fill="#fff" /><rect x="3" y="14" width="14" height="4" fill="#fff" /><rect x="3" y="21" width="14" height="4" fill="#fff" /><path d="M20 19 25 25 35 9" stroke="#222" strokeWidth="5" fill="none" /><path d="M20 18 25 24 35 9" stroke="#fff" strokeWidth="3" fill="none" /></>}
      {k === "play" && <><path d="M4 41 37 35 24 32Z" fill="#0c0c0c" /><path d="M4 2 36 20.500 4 39Z" fill="url(#pl)" /></>}
    </svg>
  );
}

function Tool({ k, label, w, tw }: { k: string; label: string; w: string; tw: number }) {
  return (
    <div className={`flex flex-col items-center pt-[2px] ${w}`}>
      <ToolIcon k={k} />
      <Fit w={tw} className="text-[12.5px] leading-[13px] text-[#ddd] [text-shadow:1px_1px_1px_#000]">{label}</Fit>
    </div>
  );
}

const Sep = () => <div className="mt-[2px] h-[58px] w-[2px] bg-[#2b2b2b]" />;

function Toolbar() {
  return (
    <div className="relative flex h-[63px] bg-[#3e3e3e]">
      <svg className="absolute left-0 top-0" width="10" height="10"><path d="M0 0H10L0 10Z" fill="#a3831e" /></svg>
      <Tool k="compile" label="Compile" w="w-[60px]" tw={44} />
      <div className="flex w-[32px] justify-center pr-[8px] pt-[29px]"><Caret /></div>
      <Sep />
      <Tool k="save" label="Save" w="ml-[7px] w-[54px]" tw={26} />
      <Tool k="browse" label="Browse" w="w-[51px]" tw={40} />
      <div className="w-[9px]" />
      <Sep />
      <Tool k="find" label="Find" w="ml-[6px] w-[54px]" tw={24} />
      <Tool k="hide" label="Hide Unrelated" w="w-[92px]" tw={79} />
      <div className="flex w-[38px] justify-center pr-[7px] pt-[29px]"><Caret /></div>
      <Sep />
      <Tool k="settings" label="Class Settings" w="ml-[5px] w-[94px]" tw={77} />
      <Tool k="defaults" label="Class Defaults" w="w-[96px]" tw={78} />
      <div className="w-[8px]" />
      <Sep />
      <Tool k="play" label="Play" w="ml-[2px] w-[62px]" tw={24} />
      <div className="flex w-[16px] justify-center pt-[29px]"><Caret /></div>
      <div className="ml-[7px] flex w-[159px] flex-col items-center pt-[16px]">
        <div className="flex h-[22px] w-[159px] items-center border border-[#999] bg-[#dadada] pl-[5px] text-[13px] leading-none text-black">
          <Fit w={135}>No debug object selected</Fit>
          <span className="ml-[2px]"><Caret c="#000" w={8} /></span>
        </div>
        <Fit w={65} className="mt-[3px] text-[12.5px] leading-[13px] text-[#ddd]">Debug Filter</Fit>
      </div>
    </div>
  );
}

function AddButton() {
  return <div className="flex h-[18px] w-[20px] shrink-0 items-center justify-center rounded-[2px] bg-[#474747]"><svg width="11" height="11" viewBox="0 0 11 11"><path d="M5.500 0V11M0 5.500H11" stroke="#fff" strokeWidth="3" /></svg></div>;
}

function LeftPanel() {
  const rows: [string, string, number][] = [["e", "Ev", 11], ["e", "Ev", 11], ["e", "O", 8], ["k", "R", 7], ["k", "Es", 11], ["e", "O", 8]];
  const heads: [string, number][] = [["Func", 26], ["Mac", 25], ["Varia", 26], ["Even", 26]];
  return (
    <div className="flex h-[972px] w-[58px] shrink-0 flex-col">
      <div className="flex h-[22px] w-[53px] items-center gap-[5px] bg-[#3a3a3a] pl-[6px]"><Book /><div className="h-[10px] w-[2px] bg-[#ddd]" /><X className="ml-[2px]" /></div>
      <div className="flex grow flex-col bg-[#3e3e3e]">
        <div className="ml-[2px] mt-[6px] flex h-[24px] items-center gap-[4px] rounded-l-[2px] border-b border-[#2d6b2d] bg-[#50a650] pl-[3px] text-[13px] text-white [text-shadow:1px_1px_1px_#000]">
          <svg className="shrink-0" width="11" height="11" viewBox="0 0 11 11"><path d="M5.500 0V11M0 5.500H11" stroke="#fff" strokeWidth="2.800" /></svg>
          <Fit w={38}>Add Ne</Fit>
        </div>
        <div className="mt-[8px] flex h-[24px] w-[56px] items-center bg-[#2e2e2e] pr-[2px]">
          <svg width="6" height="8" viewBox="0 0 6 8"><path d="M6 0V8H0Z" fill="#aaa" /></svg>
          <Fit w={26} className="mx-px text-[12.5px] font-bold text-[#ddd] [text-shadow:1px_1px_1px_#000]">Grap</Fit>
          <AddButton />
        </div>
        <div className="flex h-[20px] items-center"><svg width="6" height="8" viewBox="0 0 6 8"><path d="M6 0V8H0Z" fill="#aaa" /></svg><span className="ml-[2px] mr-[3px]"><GraphIcon s={16} /></span><Fit w={20} className="text-[12.5px] text-[#ddd]">Eve</Fit></div>
        {rows.map(([k, t, w], i) => (
          <div key={i} className="flex h-[20px] items-center pl-[18px]">
            {k === "e" ? (
              <svg className="shrink-0" width="15" height="15" viewBox="0 0 15 15"><path d="M7.500 1 14 7.500 7.500 14 1 7.500Z" fill="none" stroke="#eee" strokeWidth="1.500" /><path d="M7 1.500V5L4.500 7.500 7 10V13.500L1 7.500Z" fill="#eee" /></svg>
            ) : (
              <svg className="shrink-0" width="15" height="15" viewBox="0 0 15 15" fill="#e4e8ee"><path d="M1 1h3v3H1zM5 1h3v3H5zM9 1h3v3H9zM3 5h3v3H3zM7 5h3v3H7zM11 5h3v3h-3zM2 9h3v2H2zM6 9h3v5H6zM10 9h3v2h-3zM3 12h2v2H3zM10 12h2v2h-2z" /></svg>
            )}
            <Fit w={w} className="ml-[4px] text-[12px] text-[#ddd]">{t}</Fit>
          </div>
        ))}
        <div className="mt-[2px] flex flex-col gap-[2px]">
          {heads.map(([t, w]) => (
            <div key={t} className="flex h-[24px] w-[56px] items-center justify-between rounded-r-[3px] bg-[#2e2e2e] pl-[8px] pr-[2px]">
              <Fit w={w} className="text-[12.5px] font-bold text-[#ddd] [text-shadow:1px_1px_1px_#000]">{t}</Fit>
              <AddButton />
            </div>
          ))}
        </div>
      </div>
    </div>
  );
}

function MainWindow() {
  const menu: [string, number][] = [["File", 19], ["Edit", 21], ["View", 26], ["Debug", 34], ["Window", 43], ["Help", 23]];
  return (
    <div className="flex h-[1039px] w-[1647px] shrink-0 flex-col overflow-hidden rounded-tr-[4px] border-b border-r border-t border-[#5a5d5c] bg-[#232323]">
      <div className="relative flex h-[40px] shrink-0 items-end border-b border-black bg-[linear-gradient(180deg,#1b1f1d_0px,#1b1f1d_4px,#4d4d4d_5px,#3c3c3c_14px,#232323_28px,#1f1f1f)]">
        <svg className="mb-[13px] ml-[-4px]" width="22" height="20" viewBox="0 0 22 20"><path d="M0 5 6 1V14Q7 16 10 14V4L8 3 14 0Q16 1 19 1 15 4 15 7V13Q16 15 19 12 18 16 12 19 10 17 10 16 8 19 4 19 1 18 2 14V6Z" fill="#fff" /></svg>
        <div className="relative ml-[13px] h-[26px] w-[210px]">
          <svg className="absolute inset-0" width="210" height="26" viewBox="0 0 210 26"><defs><linearGradient id="tab" x1="0" y1="0" x2="0" y2="1"><stop offset="0" stopColor="#757575" /><stop offset="1" stopColor="#7e7e7e" /></linearGradient></defs><path d="M0 26C8 24 6 1 18 .5H190C202 1 199 24 210 26Z" fill="url(#tab)" stroke="#999" strokeWidth=".5" /></svg>
          <div className="relative flex h-[24px] items-center pl-[17px] pr-[17px] text-[12.5px] text-[#e6e6e6]">
            <div className="flex h-[17px] w-[18px] items-center justify-center border-b-2 border-[#3a7bf0] bg-[#29344a]"><Book s={15} /></div>
            <Fit w={32} className="ml-[6px] leading-none [text-shadow:1px_1px_1px_#000]">Main*</Fit>
            <X className="ml-auto" />
          </div>
        </div>
        <div className="absolute left-[1491px] top-[-16px] h-[78px] w-[78px] rounded-full bg-[radial-gradient(circle,rgba(0,160,30,.3),rgba(0,70,10,.16)_60%,transparent_72%)]" />
        <div className="relative mb-[6px] ml-auto flex h-[22px] w-[22px] items-center justify-center rounded-full border-2 border-[#14c428] bg-[#14521d]"><Hat s={16} /></div>
        <div className="mb-[19px] ml-[8px] mr-[7px]"><WinButtons /></div>
      </div>
      <div className="flex h-[20px] w-[1641px] shrink-0 items-center gap-[20px] border-b border-black bg-[linear-gradient(180deg,#282828,#191919)] pl-[5px] pt-[2px] text-[12.5px] leading-none text-[#d8d8d8]">
        {menu.map(([t, w]) => <Fit key={t} w={w}>{t}</Fit>)}
      </div>
      <div className="mt-px flex h-[972px] shrink-0">
        <LeftPanel />
        <div className="ml-[5px] flex w-[1541px] flex-col">
          <Toolbar />
          <div className="ml-[4px] mt-[5px] flex h-[22px] w-[150px] items-center rounded-t-[2px] border-t border-[#b5a11c] bg-[#3e3e3e] pl-[6px] text-[12.5px] text-[#ddd]">
            <GraphIcon s={16} /><Fit w={66} className="ml-[6px] leading-none [text-shadow:1px_1px_1px_#000]">Event Graph</Fit><X className="ml-auto mr-[10px]" />
          </div>
          <div className="h-[796px] border-2 border-[#3e3e3e]"><Canvas /></div>
          <div className="ml-[3px] mt-[6px] flex h-[22px] w-[151px] items-center rounded-t-[2px] bg-[#3e3e3e] pl-[8px] text-[12.5px] text-[#ddd]">
            <svg width="15" height="16" viewBox="0 0 15 16"><rect x="1" y="1" width="11" height="14" fill="#8ea3dc" /><path d="M2 3 8 8 2 13" stroke="#fff" strokeWidth="2.200" fill="none" /><path d="M8 13h6" stroke="#fff" strokeWidth="2" /></svg>
            <Fit w={92} className="ml-[6px] leading-none [text-shadow:1px_1px_1px_#000]">Compiler Results</Fit><X className="ml-auto mr-[9px]" />
          </div>
          <div className="relative flex h-[58px] flex-col bg-[#3e3e3e] pl-[5px] pr-[6px] pt-[6px]">
            <div className="flex h-[15px] items-start overflow-hidden bg-[#222] pl-[9px] font-['Liberation_Mono',monospace] text-[12px] leading-[13px] text-[#b0b0b0]">
              <span className="-mt-[2px] w-[18px]">•</span>
              <Fit w={763} className="-mt-[2px]">[9447,64] Compile of PersistentLevel.Main successful! [in 49 ms] (/Game/Level/Main.Main:PersistentLevel.Main)</Fit>
            </div>
            <div className="mt-[8px] flex justify-end pr-[6px]"><Fit w={28} className="text-[12.5px] text-[#ddd]">Clear</Fit></div>
            <div className="absolute right-[10px] top-0 h-[16px] w-[11px] bg-white" />
          </div>
        </div>
        <div className="ml-[4px] flex w-[33px] flex-col">
          <div className="ml-[5px] flex h-[22px] w-[23px] items-center justify-center bg-[#3e3e3e]">
            <svg width="17" height="17" viewBox="0 0 17 17"><path d="M11 11 15.500 15.500" stroke="#6d8de0" strokeWidth="2.500" /><circle cx="7.500" cy="7.500" r="6" fill="#565b66" stroke="#7d98dd" strokeWidth="1.500" /><path d="M7.500 6.500V11M6 11h3M6 6.500h1.500M7.500 3.500v1.600" stroke="#fff" strokeWidth="1.500" /></svg>
          </div>
          <div className="grow bg-[#3e3e3e]" />
        </div>
      </div>
    </div>
  );
}

/* ---------- right-hand editor column ---------- */

function Lens() {
  return <svg width="16" height="16" viewBox="0 0 16 16" fill="none" stroke="#000"><circle cx="9" cy="6.500" r="5" strokeWidth="2" /><path d="M5.500 10.500 1.500 15" strokeWidth="3" /></svg>;
}
function Eye() {
  return <svg className="shrink-0" width="18" height="12" viewBox="0 0 18 12"><path d="M0 6Q9-5 18 6 9 16 0 6Z" fill="#e0e0e0" /><circle cx="9" cy="6" r="3.800" fill="#7688b5" /><circle cx="9" cy="5.800" r="1.700" fill="#2d3a5c" /></svg>;
}
function ListBtn() {
  return <div className="flex h-[24px] w-[27px] items-center justify-center border border-[#eee] bg-[linear-gradient(180deg,#c4c4c4,#a0a0a0)]"><svg width="14" height="15" viewBox="0 0 14 15"><path d="M0 1.500H14M0 4.500H14M0 7.500H14M0 10.500H14M0 13.500H14" stroke="#555" strokeWidth="1.500" strokeDasharray="3.500 .8 4.300 .8 4.600 0" /></svg></div>;
}

function RowIcon({ k }: { k: string }) {
  return (
    <svg className="block shrink-0" width="18" height="16" viewBox="0 0 18 16">
      {k === "world" && <><path d="M3 11 5 3 7 8 10 1 12 7 16 4 16 11 10 15Z" fill="#b9b9b9" /><path d="M3 10 10 15 16 10 11 9Z" fill="#e6e6e6" /></>}
      {k === "fog" && <><ellipse cx="13" cy="4" rx="3.500" ry="2.500" fill="#eee" /><path d="M5 10q0-3 3-3 1-3 4-1 3 0 3 4Z" fill="#ddd" /><path d="M5 12.500H15M6 15H16" stroke="#222" strokeWidth="1.500" /></>}
      {k === "mesh" && <><path d="M4 14V7L10 2.500 16 7V14H13.500V9L11 7.500V14H8.500V8L6 9.500V14Z" fill="#a8a8a8" /><path d="M4 7 10 2.500 16 7" stroke="#dcdcdc" strokeWidth="1" fill="none" /></>}
      {k === "light" && <><circle cx="12" cy="7" r="2.800" fill="#eee" /><path d="M12 1v2M12 11v2M6.500 7h2M15.500 7h2M15 3.500 16 2M4 12l4-3M5 15l5-4" stroke="#ddd" strokeWidth="1.400" /></>}
      {k === "player" && <><path d="M4 1 6 6" stroke="#ddd" strokeWidth="1.200" /><path d="M6 4 10 3 15 7 16 13 13 13 12 9 9 11 7 14H5L8 8Z" fill="#cfcfcf" /></>}
      {k === "sphere" && <circle cx="10" cy="8" r="6" fill="#e8e8e8" />}
      {k === "sky" && <><path d="M3 11Q3 3 10 3T17 11Z" fill="#e8e8e8" /><path d="M6 10 8 6M14 10 12 6M10 9V5" stroke="#222" strokeWidth="1.500" /><path d="M3 13.500H17" stroke="#111" /></>}
      {k === "refl" && <><circle cx="10" cy="8" r="6" fill="#ddd" /><path d="M5 10 12 3M8 13l7-7M6 6l6 6" stroke="#333" strokeWidth="1.300" /></>}
      {k === "box" && <><ellipse cx="11" cy="13" rx="6" ry="2" fill="#1c1c1c" /><path d="M5 3 14 2V11L8 12 5 10Z" fill="#8f8f8f" /><path d="M10 2.500V12" stroke="#bbb" strokeWidth="1.500" /></>}
      {(k === "fog" || k === "mesh" || k === "box") && <circle cx="3" cy="3" r="2.600" fill="#ff8a10" />}
      {k === "light" && <circle cx="3" cy="3" r="2.600" fill="#ffe020" />}
    </svg>
  );
}

function SearchRow() {
  return (
    <div className="flex h-[24px] shrink-0 items-center">
      <div className="flex h-[18px] w-[199px] items-center justify-between rounded-r-[2px] bg-[#cacaca] pr-[1px] text-[13px] text-[#8f8f8f]"><Fit w={43}>n Details</Fit><Lens /></div>
      <div className="ml-[8px]"><ListBtn /></div>
      <div className="ml-[4px] flex items-center gap-[3px]"><Eye /><Caret w={8} c="#c8c8c8" /></div>
    </div>
  );
}

function Tab({ label, tw }: { label: string; tw: number }) {
  return (
    <div className="flex h-[22px] w-[111px] items-center justify-between rounded-tr-[2px] bg-[#3e3e3e] pr-[10px] text-[12.5px] leading-none text-[#ddd] [text-shadow:1px_1px_1px_#000]">
      <Fit w={tw}>{label}</Fit><X />
    </div>
  );
}

function Cat({ label = "", tw = 0 }: { label?: string; tw?: number }) {
  return (
    <div className="flex h-[29px] w-[271px] shrink-0 items-center rounded-r-[2px] bg-[#2f2f2f]">
      <div className="flex h-full w-[63px] items-center border-r border-[#1d1d1d] text-[13px] font-bold text-[#e4e4e4] [text-shadow:1px_1px_1px_#000]">
        {label && <Fit w={tw}>{label}</Fit>}
      </div>
    </div>
  );
}

function Prop({ label, tw = 62, h = "h-[24px]", dim, children }: { label?: string; tw?: number; h?: string; dim?: boolean; children?: ReactNode }) {
  return (
    <div className={`flex shrink-0 items-center ${h}`}>
      <div className={`flex h-full w-[63px] shrink-0 items-center border-r border-[#2a2a2a] text-[11.5px] ${dim ? "text-[#858585]" : "text-[#d2d2d2]"}`}>
        {label && <Fit w={tw}>{label}</Fit>}
      </div>
      {children}
    </div>
  );
}

function CB({ on }: { on?: boolean }) {
  return <div className={`ml-[4px] flex h-[14px] w-[14px] items-center justify-center rounded-[2px] ${on ? "bg-[#dcdcdc]" : "bg-[#adadad]"}`}>{on && <svg width="11" height="10" viewBox="0 0 11 10"><path d="M1.500 5.500 4.200 8 9.500 2" stroke="#666" strokeWidth="2.600" fill="none" /></svg>}</div>;
}

function Num({ children, dim, tw }: { children: string; dim?: boolean; tw: number }) {
  return (
    <div className={`ml-[3px] flex h-[17px] w-[105px] items-center justify-between rounded-[3px] pl-[4px] pr-[6px] text-[11.5px] leading-none ${dim ? "bg-[#808080] text-[#333]" : "bg-[#dadada] text-black"}`}>
      <Fit w={tw}>{children}</Fit>
      <svg width="8" height="8" viewBox="0 0 8 8"><path d="M3.500 0H8V4.500ZM0 3.500V8H4.500Z" fill={dim ? "#333" : "#000"} /></svg>
    </div>
  );
}

function Expander() {
  return (
    <div className="flex h-[14px] w-[271px] shrink-0 justify-center border-t border-[#2c2c2c] bg-[#474747] pr-[56px] pt-[2px]">
      <svg width="11" height="8" viewBox="0 0 11 8"><path d="M0 .5H11" stroke="#ddd" strokeWidth="1" /><path d="M.500 2.500H10.500L5.500 7.500Z" fill="#ddd" /></svg>
    </div>
  );
}

function RightColumn() {
  const rows: [string, string, number, string, number][] = [
    ["fog", "Atmospheric Fog", 91, "AtmosphericFo", 77],
    ["mesh", "Ball", 21, "StaticMeshAct", 77],
    ["light", "Light Source", 68, "DirectionalLigh", 77],
    ["player", "Player Start", 63, "PlayerStart", 60],
    ["mesh", "PuzzleModel01", 82, "StaticMeshAct", 77],
    ["sphere", "Sky Sphere", 59, "Edit BP_Sky_S", 76],
    ["sky", "SkyLight", 47, "SkyLight", 47],
    ["refl", "SphereReflectionCapture", 134, "SphereReflectic", 78],
    ["box", "TriggerBox WIN", 83, "TriggerBox", 59],
    ["box", "triggerboxlose", 77, "TriggerBox", 59],
  ];
  return (
    <div className="flex h-[1041px] w-[272px] flex-col overflow-hidden bg-[#232323]">
      <div className="relative flex h-[28px] shrink-0 overflow-hidden bg-[repeating-linear-gradient(135deg,#232323_0px,#232323_9px,#2c2c2c_9px,#2c2c2c_18px)]">
        <div className="absolute -left-[25px] -top-[32px] h-[74px] w-[74px] rounded-full border-[5px] border-[#158a1c] bg-[#0c3a12] shadow-[0_0_8px_4px_rgba(0,130,10,.4)]" />
        <div className="relative ml-[5px] mt-[4px]"><Hat s={19} /></div>
        <div className="relative ml-[6px] flex h-[24px] w-[145px] items-center justify-center rounded-b-[5px] bg-black text-[17px] text-[#6c6c6c]"><Fit w={112}>PuzzleGame_IN</Fit></div>
        <div className="relative ml-auto mr-[1px]"><WinButtons max /></div>
      </div>
      <div className="h-[19px] shrink-0 border-b border-black bg-[linear-gradient(180deg,#282828,#191919)]" />
      <div className="flex h-[22px] shrink-0">
        <Tab label="orld Outliner" tw={65} />
        <div className="ml-[1px] flex w-[150px] items-center bg-[#303030] pl-[6px] text-[12.5px] leading-none text-[#ddd]">
          <svg width="16" height="16" viewBox="0 0 16 16"><path d="M0 5 5 9 8 2 10 7 14 1 15 11 8 15 2 12Z" fill="#8fb4ea" /><path d="M1 6 6 11 2 12Z" fill="#3f6fd0" /></svg>
          <Fit w={35} className="ml-[6px] [text-shadow:1px_1px_1px_#000]">Levels</Fit><X className="ml-auto mr-[10px]" />
        </div>
      </div>
      <div className="flex h-[358px] shrink-0 flex-col bg-[#3e3e3e]">
        <div className="mt-[10px] flex h-[18px] shrink-0 items-center">
          <div className="flex h-[18px] w-[237px] items-center justify-between rounded-r-[2px] bg-[#cacaca] pr-[1px] text-[13px] text-[#8f8f8f]"><Fit w={16}>h...</Fit><Lens /></div>
          <svg className="-mt-[4px] ml-[8px]" width="17" height="16" viewBox="0 0 17 16"><path d="M6 2 14 0 16 11 8 13Z" fill="#8ea5e4" /><path d="M5 4V14M0 9H10" stroke="#fff" strokeWidth="2.500" /></svg>
        </div>
        <div className="relative mt-[5px] flex h-[23px] w-[265px] shrink-0 items-center justify-between border-t border-black bg-[linear-gradient(180deg,#2b2b2b,#1c1c1c)] text-[12.5px] text-[#ddd]">
          <Fit w={15}>bel</Fit>
          <svg className="absolute left-[78px] top-[2px]" width="8" height="5"><path d="M4 0 8 5H0Z" fill="#ddd" /></svg>
          <div className="flex h-full w-[82px] items-center justify-between border-l border-[#444] pl-[4px] pr-[5px]">
            <Fit w={26}>Type</Fit>
            <svg className="mb-[-12px]" width="8" height="6"><path d="M0 .500H8" stroke="#aaa" /><path d="M0 2H8L4 6Z" fill="#aaa" /></svg>
          </div>
        </div>
        <div className="flex h-[18px] w-[265px] shrink-0 items-center bg-[#484848] text-[12.5px] leading-none">
          <span className="-ml-[1px]"><RowIcon k="world" /></span><Fit w={70} className="ml-[4px] text-[#e2e2e2]">Main (Editor)</Fit>
          <Fit w={30} className="ml-auto mr-[51px] text-[#9a9a9a]">World</Fit>
        </div>
        {rows.map(([k, n, w, t, tw], i) => (
          <div key={i} className={`flex w-[265px] shrink-0 items-center text-[12.5px] leading-none ${k === "sphere" ? "h-[19px] pt-px" : "h-[18px]"} ${i === 0 ? "bg-[#c9ab85] text-black" : "text-[#e2e2e2]"}`}>
            <span className="ml-[9px]"><RowIcon k={k} /></span>
            <div className="ml-[6px] w-[151px] shrink-0"><Fit w={w}>{n}</Fit></div>
            <Fit w={tw} className={k === "sphere" ? "ml-[2px] border-b border-dotted border-[#7ab2ff] text-[#7ab2ff]" : i === 0 ? "text-[#6a5a48]" : "text-[#9a9a9a]"}>{t}</Fit>
          </div>
        ))}
        <div className="mt-auto h-px w-[264px] shrink-0 bg-[#8a8a8a]" />
        <div className="flex h-[34px] shrink-0 items-center pb-[5px] text-[12.5px] leading-none text-[#ddd]">
          <Fit w={89}>ctors (1 selected)</Fit>
          <div className="ml-[70px] flex items-center gap-[3px]"><Eye /><Fit w={71}>View Options</Fit><Caret w={8} c="#c8c8c8" /></div>
        </div>
      </div>
      <div className="flex h-[27px] shrink-0 items-end"><Tab label="etails" tw={26} /></div>
      <div className="relative flex h-[232px] shrink-0 flex-col bg-[#3e3e3e]">
        <div className="mb-[3px] mt-[4px] flex h-[18px] shrink-0 items-center justify-between pr-[6px]">
          <div className="flex h-[18px] w-[181px] items-center rounded-r-[3px] bg-[#dadada] text-[13px] leading-none text-black"><Fit w={77}>mospheric Fog</Fit></div>
          <svg className="-mt-[4px]" width="13" height="14" viewBox="0 0 13 14"><path d="M1 9V3.500Q1 1 3 1T5 3.500V7" fill="none" stroke="#c8c8c8" strokeWidth="1.300" /><rect x="3.500" y="7" width="9" height="6.500" fill="#c8c8c8" /><path d="M8 9v2.500" stroke="#333" strokeWidth="1.500" /></svg>
        </div>
        <SearchRow />
        <Prop h="h-[8px]" />
        <div className="h-[2px] shrink-0" />
        <Cat label="lering" tw={31} />
        <Prop label="le" tw={8}><CB on /></Prop>
        <Prop label="r Hidden In G" tw={61}><CB /></Prop>
        <Prop label="r Billboard Sc" tw={61} h="h-[26px]"><Num tw={14}>1,0</Num></Prop>
        <Expander />
        <Cat />
        <Prop label="ponent Tags" tw={59} h="h-[27px]">
          <Fit w={86} className="ml-[7px] text-[11.5px] text-[#d2d2d2]">0 Array elements</Fit>
          <div className="ml-[22px] flex items-center gap-[14px]">
            <svg width="11" height="11" viewBox="0 0 11 11"><path d="M5.500 0V11M0 5.500H11" stroke="#e4e4e4" strokeWidth="3" /></svg>
            <svg width="10" height="12" viewBox="0 0 10 12"><path d="M0 2H10M3 .700H7" stroke="#ddd" strokeWidth="1.400" /><path d="M1 3.500H9L8.500 12H1.500Z" fill="#ddd" /><path d="M3.500 5v5.500M5 5v5.500M6.500 5v5.500" stroke="#444" strokeWidth=".7" /></svg>
          </div>
        </Prop>
        <div className="absolute left-[263px] top-[51px] h-[176px] w-px bg-[#606060]" />
        <div className="absolute left-[258px] top-[122px] h-[53px] w-[10px] bg-white" />
      </div>
      <div className="flex h-[27px] shrink-0 items-end"><Tab label="orld Settings" tw={67} /></div>
      <div className="relative flex h-[325px] shrink-0 flex-col overflow-hidden bg-[#3e3e3e] pt-[2px]">
        <SearchRow />
        <div className="flex h-[15px] shrink-0 items-end overflow-hidden"><Prop label="le World Com"><CB /></Prop></div>
        <Prop label="Client Side Le" tw={61}><CB /></Prop>
        <Prop h="h-[25px]"><Num tw={55}>-1048575,0</Num></Prop>
        <Expander />
        <Cat label="sics" tw={19} />
        <Prop label="ride World Gr"><CB /></Prop>
        <Prop label="al Gravity Z" tw={55} h="h-[25px]" dim><Num tw={14} dim>0,0</Num></Prop>
        <Expander />
        <Cat label="dphase" tw={42} />
        <Prop label="ride Default B" tw={61}><CB /></Prop>
        <Prop label="dphase Setti" tw={61} />
        <Prop h="h-[14px]" />
        <Cat />
        <div className="ml-[66px] mt-[4px] h-[4px] w-[105px] shrink-0 rounded-t-[2px] bg-[#dadada]" />
        <div className="absolute left-[263px] top-[28px] h-[295px] w-px bg-[#606060]" />
        <div className="absolute left-[258px] top-[90px] h-[101px] w-[10px] bg-white" />
      </div>
      <div className="h-[3px] shrink-0 bg-[#2b1514]" />
    </div>
  );
}

export default function App() {
  return (
    <div className="flex h-[1041px] w-[1919px] overflow-hidden bg-[#1c1816] font-[Roboto,sans-serif]">
      <div className="flex flex-col">
        <MainWindow />
        <div className="flex h-[2px] bg-[#1c1211] pt-px"><div className="h-px w-[392px] bg-[#bdbdbd]" /><div className="ml-[395px] h-px w-[45px] bg-[#c86a20]" /></div>
      </div>
      <RightColumn />
    </div>
  );
}
